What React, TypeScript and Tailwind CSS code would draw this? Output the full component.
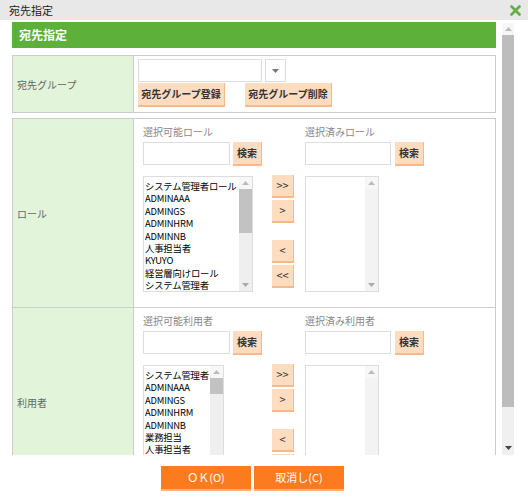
import React from 'react';

const roles = ['システム管理者ロール', 'ADMINAAA', 'ADMINGS', 'ADMINHRM', 'ADMINNB', '人事担当者', 'KYUYO', '経営層向けロール', 'システム管理者'];
const users = ['システム管理者', 'ADMINAAA', 'ADMINGS', 'ADMINHRM', 'ADMINNB', '業務担当', '人事担当者', '給与担当者', '経営層'];

function Tri({ up, color = '#999' }: { up?: boolean; color?: string }) {
  return (
    <svg width="7" height="4" viewBox="0 0 7 4">
      <path d={up ? 'M0 4 L3.5 0 L7 4 Z' : 'M0 0 L7 0 L3.5 4 Z'} fill={color} />
    </svg>
  );
}

function PeachButton({ children, className = '' }: { children: React.ReactNode; className?: string }) {
  return (
    <button className={`bg-[#fddcbf] border-b-2 border-r border-[#f5b98c] text-[10px] font-bold text-[#333] flex items-center justify-center leading-none ${className}`}>
      {children}
    </button>
  );
}

function ListBox({ items, className, thumb }: { items: string[]; className: string; thumb?: { height: number } }) {
  return (
    <div className={`border border-[#ddd] bg-white flex overflow-hidden ${className}`}>
      <div className="flex-1 overflow-hidden pt-[3px] pl-[1px] text-[9.4px] tracking-[-0.2px] leading-[12.4px] text-black whitespace-nowrap">
        {items.map(i => <div key={i}>{i}</div>)}
      </div>
      <div className={`w-[13px] shrink-0 flex flex-col ${thumb ? 'bg-[#efefef]' : 'bg-[#f3f3f3]'}`}>
        <div className="h-[12px] flex items-center justify-center bg-[#f7f7f7]"><Tri up color="#bbb" /></div>
        {thumb && <div className="bg-[#c2c2c2]" style={{ height: thumb.height }} />}
        <div className="flex-1" />
        <div className="h-[12px] flex items-center justify-center"><Tri color="#aaa" /></div>
      </div>
    </div>
  );
}

function Arrows() {
  return (
    <div className="w-[33px] pt-[50px] flex flex-col">
      <PeachButton className="w-[22px] h-[23px] font-normal text-[11px]">&gt;&gt;</PeachButton>
      <PeachButton className="w-[22px] h-[23px] mt-[2px] font-normal text-[11px]">&gt;</PeachButton>
      <PeachButton className="w-[22px] h-[23px] mt-[17px] font-normal text-[11px]">&lt;</PeachButton>
      <PeachButton className="w-[22px] h-[23px] mt-[2px] font-normal text-[11px]">&lt;&lt;</PeachButton>
    </div>
  );
}

function Picker({ left, right, items, leftListW, thumb }: { left: string; right: string; items: string[]; leftListW: string; thumb: { height: number } }) {
  return (
    <div className="flex pl-[9px] pt-[6px] pb-[15px]">
      <div className="w-[129px]">
        <div className="text-[10px] leading-[14px] text-[#888]">{left}</div>
        <div className="flex mt-[3px]">
          <div className="w-[87px] h-[23px] border border-[#ddd] bg-white" />
          <PeachButton className="ml-[3px] w-[29px] h-[24px]">検索</PeachButton>
        </div>
        <ListBox items={items} className={`mt-[10px] h-[116px] ${leftListW}`} thumb={thumb} />
      </div>
      <Arrows />
      <div>
        <div className="text-[10px] leading-[14px] text-[#888]">{right}</div>
        <div className="flex mt-[3px]">
          <div className="w-[86px] h-[23px] border border-[#ddd] bg-white" />
          <PeachButton className="ml-[4px] w-[29px] h-[24px]">検索</PeachButton>
        </div>
        <ListBox items={[]} className="mt-[10px] h-[116px] w-[74px]" />
      </div>
    </div>
  );
}

export default function App() {
  return (
    <div className="w-[528px] h-[498px] bg-white overflow-hidden font-['Noto_Sans_CJK_JP',sans-serif]">
      <div className="h-[20px] bg-[#e8e8e8] flex items-center justify-between pl-[9px] pr-[7px]">
        <span className="text-[11px] text-[#222]">宛先指定</span>
        <svg width="11" height="11" viewBox="0 0 11 11">
          <path d="M1.5 1.5 L9.5 9.5 M9.5 1.5 L1.5 9.5" stroke="#64ad48" strokeWidth="2.6" strokeLinecap="round" />
        </svg>
      </div>

      <div className="flex h-[435px]">
        <div className="w-[496px] pl-[12px] pt-[2px] overflow-hidden">
          <div className="h-[26px] bg-[#5db13b] text-white font-bold text-[12px] pl-[7px] flex items-center">宛先指定</div>

          <div className="mt-[7px] h-[58px] border border-[#ccc] grid grid-cols-[121px_1fr]">
            <div className="bg-[#e2f4d9] border-r border-[#ccc] flex items-center pl-[4px] text-[10px] text-[#666]">宛先グループ</div>
            <div className="pl-[4px] pt-[3px]">
              <div className="flex">
                <div className="w-[124px] h-[23px] border border-[#ddd] bg-white" />
                <div className="ml-[3px] w-[21px] h-[23px] border border-[#ddd] flex items-center justify-center"><Tri color="#777" /></div>
              </div>
              <div className="flex gap-[20px] mt-[1px]">
                <PeachButton className="w-[87px] h-[24px]">宛先グループ登録</PeachButton>
                <PeachButton className="w-[87px] h-[24px]">宛先グループ削除</PeachButton>
              </div>
            </div>
          </div>

          <div className="mt-[5px] border border-[#ccc] grid grid-cols-[121px_1fr]">
            <div className="bg-[#e2f4d9] border-r border-b border-[#ccc] flex items-center pl-[4px] text-[10px] text-[#666]">ロール</div>
            <div className="border-b border-[#ccc]">
              <Picker left="選択可能ロール" right="選択済みロール" items={roles} leftListW="w-[110px]" thumb={{ height: 44 }} />
            </div>
            <div className="bg-[#e2f4d9] border-r border-[#ccc] flex items-center pl-[4px] text-[10px] text-[#666]">利用者</div>
            <div>
              <Picker left="選択可能利用者" right="選択済み利用者" items={users} leftListW="w-[81px]" thumb={{ height: 16 }} />
            </div>
          </div>
        </div>

        <div className="ml-[6px] mt-[3px] w-[12px] flex flex-col bg-[#f0f0f0]">
          <div className="h-[12px] flex items-center justify-center bg-[#f6f6f6]"><Tri up color="#bbb" /></div>
          <div className="h-[372px] bg-[#bdbdbd]" />
          <div className="flex-1" />
          <div className="h-[14px] flex items-center justify-center"><Tri color="#444" /></div>
        </div>
      </div>

      <div className="flex gap-[3px] pl-[161px] pt-[11px]">
        <button className="w-[90px] h-[25px] bg-[#fc7b1f] border-b-2 border-[#fdb07c] text-white text-[11px] flex items-center justify-center">ＯＫ(O)</button>
        <button className="w-[90px] h-[25px] bg-[#fc7b1f] border-b-2 border-[#fdb07c] text-white text-[11px] flex items-center justify-center">取消し(C)</button>
      </div>
    </div>
  );
}
